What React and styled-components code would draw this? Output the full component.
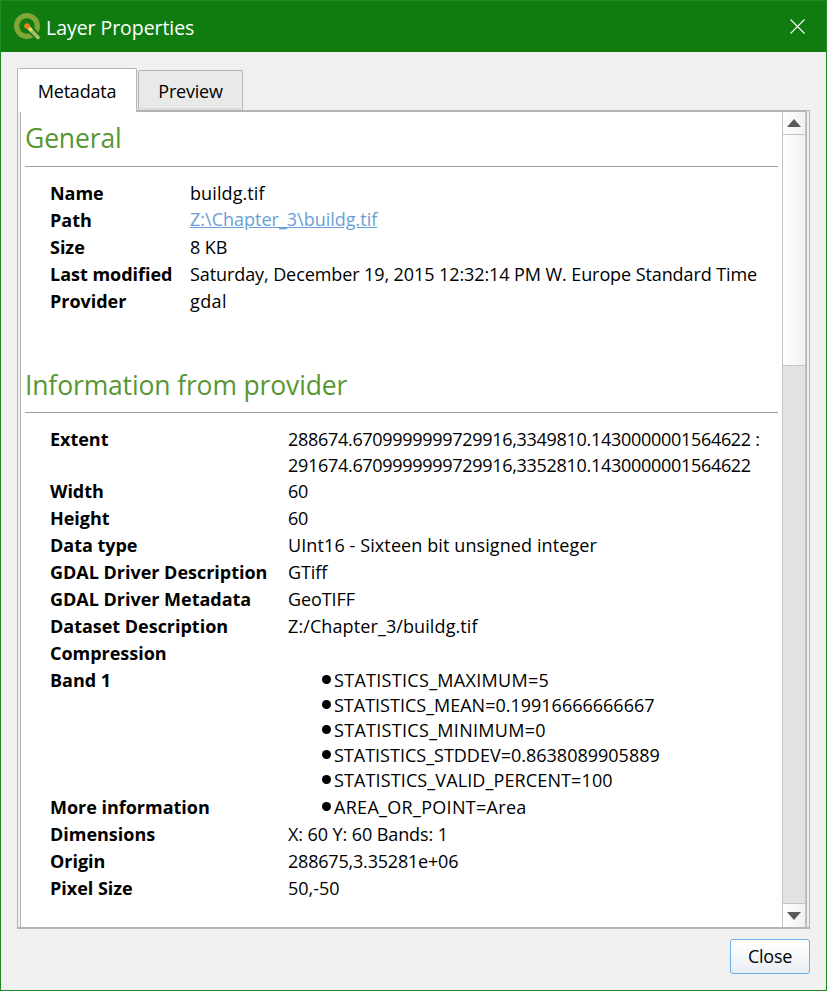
import React from "react";
import styled, { createGlobalStyle } from "styled-components";

const Global = createGlobalStyle`
  html, body { margin: 0; padding: 0; background: #f0f0f0; }
  #root { width: 827px; height: 991px; }
`;

const Win = styled.div`
  width: 827px; height: 991px; box-sizing: border-box;
  border: 1px solid #1f8a23; border-top: none;
  background: #f0f0f0; display: flex; flex-direction: column;
  font-family: "Open Sans", "Noto Sans", sans-serif; font-size: 18px; color: #000;
  overflow: hidden;
`;
const TitleBar = styled.div`
  height: 52px; flex: none; margin: 0 -1px; background: #107c10; border-top: 1px solid #1f8a23;
  box-sizing: border-box; display: flex; align-items: center; padding: 0 22px 0 13px; color: #fff;
`;
const TitleText = styled.span`
  margin-left: 5px; font-size: 19.5px; flex: 1; line-height: 1; padding-top: 2px; letter-spacing: -0.05px;
`;
const Body = styled.div`
  flex: 1; display: flex; flex-direction: column; padding: 16px 16px 0 16px; min-height: 0;
`;
const Tabs = styled.div`
  display: flex; align-items: flex-end; height: 42px; flex: none; position: relative; z-index: 1;
`;
const Tab = styled.div`
  box-sizing: border-box; display: flex; align-items: center; justify-content: center;
  border: 1px solid #b5b5b5; border-radius: 2px 2px 0 0;
  width: ${(p) => p.$w}px; height: ${(p) => (p.$active ? 44 : 40)}px;
  background: ${(p) => (p.$active ? "#fff" : "#e9e9e9")};
  border-bottom: ${(p) => (p.$active ? "none" : "2px solid #dcdcdc")};
  margin-left: ${(p) => (p.$active ? 0 : "1px")};
  margin-bottom: ${(p) => (p.$active ? "-2px" : 0)};
  letter-spacing: -0.22px; padding-top: ${(p) => (p.$active ? 0 : 2)}px;
`;
const Pane = styled.div`
  box-sizing: border-box; height: 819px; width: 793px; flex: none;
  border: 1px solid #b4b4b4; border-bottom-width: 2px; background: #f0f0f0; padding: 0 2px;
  display: flex;
`;
const Browser = styled.div`
  flex: 1; display: flex; border: 1px solid #b4b4b4; border-bottom: none; background: #fff; min-width: 0;
`;
const Content = styled.div`
  flex: 1; min-width: 0; padding: 0 4px; overflow: hidden;
`;
const Heading = styled.h2`
  margin: 0; font-weight: 400; font-size: 26.5px; line-height: 36px; color: #589632; letter-spacing: -0.14px;
  padding-top: ${(p) => p.$top}px; padding-bottom: ${(p) => p.$bottom}px; border-bottom: 1px solid #a0a0a0;
`;
const Rows = styled.div`
  display: grid; grid-template-columns: ${(p) => p.$label}px 1fr; padding-left: 25px;
  margin-top: 13px; line-height: 27px;
`;
const Label = styled.div`
  font-weight: 700; white-space: nowrap; letter-spacing: -0.02px;
`;
const Value = styled.div`
  white-space: nowrap; line-height: ${(p) => p.$lh || 27}px; letter-spacing: ${(p) => p.$ls ?? -0.09}px;
`;
const Link = styled.a`
  color: #6a9fd6; text-decoration: underline; letter-spacing: 0; vertical-align: 1px; line-height: 20px;
`;
const List = styled.ul`
  list-style: none; margin: 0; padding: 1px 0 1px 34px;
`;
const Item = styled.li`
  display: flex; align-items: center; height: 25px; gap: 3px; letter-spacing: ${(p) => p.$ls ?? 0.3}px;
  &::before { content: ""; width: 9px; height: 9px; border-radius: 50%; background: #000; flex: none; margin-top: -3px; }
`;
const Scroll = styled.div`
  width: 24px; flex: none; display: flex; flex-direction: column; border-left: 1px solid #c4c4c4; border-right: 1px solid #c4c4c4; box-sizing: border-box; background: #e3e3e3;
`;
const Arrow = styled.div`
  height: ${(p) => (p.$down ? 24 : 23)}px; flex: none; box-sizing: border-box; display: flex; align-items: center; justify-content: center;
  background: linear-gradient(90deg, #fff, #f0f0f0);
  border-${(p) => (p.$down ? "top" : "bottom")}: 1px solid #c4c4c4;
`;
const Thumb = styled.div`
  height: 231px; flex: none; box-sizing: border-box; background: linear-gradient(90deg, #fff, #f0f0f0); border-bottom: 1px solid #c4c4c4;
`;
const Track = styled.div`flex: 1;`;
const Footer = styled.div`
  flex: 1; display: flex; justify-content: flex-end; padding: 10px 0 0 0;
`;
const Button = styled.button`
  width: 80px; height: 35px; box-sizing: border-box; border: 1px solid #6bb1ec; border-radius: 3px;
  background: linear-gradient(180deg, #fff, #e9eef3); font: inherit; color: #000; padding: 0 0 2px; letter-spacing: -0.25px;
`;

const Logo = () => (
  <svg width="28" height="28" viewBox="0 0 28 28">
    <circle cx="14" cy="13" r="10.4" fill="none" stroke="#7fa636" strokeWidth="5.2" />
    <path d="M15 14 L25 24" stroke="#107c10" strokeWidth="7" />
    <path d="M15 14 L25 24.5" stroke="#a9bd6a" strokeWidth="3.6" strokeLinecap="round" />
    <path d="M15.5 14.5 L18.5 17.5" stroke="#e9e06a" strokeWidth="3.4" />
    <circle cx="14" cy="13" r="2.8" fill="#ee7a25" />
  </svg>
);
const Up = ({ down }) => (
  <svg width="14" height="8" viewBox="0 0 14 8">
    <path d={down ? "M0 0H14L7 8Z" : "M0 8H14L7 0Z"} fill="#5a5a5a" />
  </svg>
);
const NUM = -0.3;

export default function App() {
  return (
    <Win>
      <Global />
      <TitleBar>
        <Logo />
        <TitleText>Layer Properties</TitleText>
        <svg width="15" height="15" viewBox="0 0 15 15"><path d="M.5.5l14 14M14.5.5l-14 14" stroke="#fff" strokeWidth="1.1" /></svg>
      </TitleBar>
      <Body>
        <Tabs>
          <Tab $active $w={120}>Metadata</Tab>
          <Tab $w={105}>Preview</Tab>
        </Tabs>
        <Pane>
          <Browser>
            <Content>
              <Heading $top={8} $bottom={10}>General</Heading>
              <Rows $label={140}>
                <Label>Name</Label><Value $ls={0.1}>buildg.tif</Value>
                <Label>Path</Label><Value><Link>Z:\Chapter_3\buildg.tif</Link></Value>
                <Label>Size</Label><Value>8 KB</Value>
                <Label>Last modified</Label><Value>Saturday, December 19, 2015 12:32:14 PM W. Europe Standard Time</Value>
                <Label>Provider</Label><Value $ls={0.4}>gdal</Value>
              </Rows>
              <Heading $top={52} $bottom={9}>Information from provider</Heading>
              <Rows $label={238}>
                <Label>Extent</Label><Value $lh={26} $ls={NUM}>288674.6709999999729916,3349810.1430000001564622 :<br />291674.6709999999729916,3352810.1430000001564622</Value>
                <Label>Width</Label><Value $ls={NUM}>60</Value>
                <Label>Height</Label><Value $ls={NUM}>60</Value>
                <Label>Data type</Label><Value $ls={0.1}>UInt16 - Sixteen bit unsigned integer</Value>
                <Label>GDAL Driver Description</Label><Value>GTiff</Value>
                <Label>GDAL Driver Metadata</Label><Value>GeoTIFF</Value>
                <Label>Dataset Description</Label><Value $ls={0.1}>Z:/Chapter_3/buildg.tif</Value>
                <Label>Compression</Label><Value />
                <Label>Band 1</Label>
                <Value>
                  <List>
                    <Item>STATISTICS_MAXIMUM=5</Item>
                    <Item $ls={0}>STATISTICS_MEAN=0.19916666666667</Item>
                    <Item>STATISTICS_MINIMUM=0</Item>
                    <Item $ls={0}>STATISTICS_STDDEV=0.8638089905889</Item>
                    <Item $ls={0.12}>STATISTICS_VALID_PERCENT=100</Item>
                  </List>
                </Value>
                <Label>More information</Label>
                <Value><List><Item>AREA_OR_POINT=Area</Item></List></Value>
                <Label>Dimensions</Label><Value>X: 60 Y: 60 Bands: 1</Value>
                <Label>Origin</Label><Value $ls={-0.2}>288675,3.35281e+06</Value>
                <Label>Pixel Size</Label><Value $ls={0}>50,-50</Value>
              </Rows>
            </Content>
            <Scroll>
              <Arrow><Up /></Arrow>
              <Thumb />
              <Track />
              <Arrow $down><Up down /></Arrow>
            </Scroll>
          </Browser>
        </Pane>
        <Footer><Button>Close</Button></Footer>
      </Body>
    </Win>
  );
}
